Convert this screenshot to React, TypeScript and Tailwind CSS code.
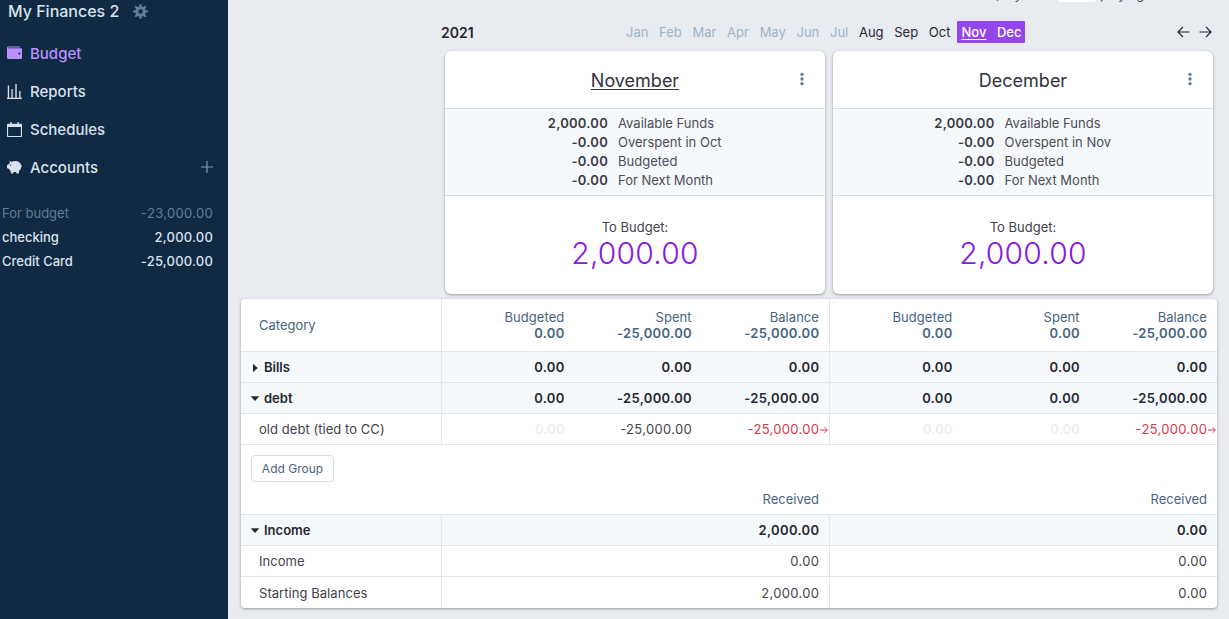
import React from "react";

const months = ["Jan", "Feb", "Mar", "Apr", "May", "Jun", "Jul", "Aug", "Sep", "Oct"];

function GearIcon() {
  return (
    <svg viewBox="0 0 20 20" className="h-[15px] w-[15px] fill-[#627d98]">
      <path d="M3.94 6.5L2.22 3.64l1.42-1.42L6.5 3.94c.52-.3 1.1-.54 1.7-.7L9 0h2l.8 3.24c.6.16 1.18.4 1.7.7l2.86-1.72 1.42 1.42-1.72 2.86c.3.52.54 1.1.7 1.7L20 9v2l-3.24.8c-.16.6-.4 1.18-.7 1.7l1.72 2.86-1.42 1.42-2.86-1.72c-.52.3-1.1.54-1.7.7L11 20H9l-.8-3.24c-.6-.16-1.18-.4-1.7-.7l-2.86 1.72-1.42-1.42 1.72-2.86c-.3-.52-.54-1.1-.7-1.7L0 11V9l3.24-.8c.16-.6.4-1.18.7-1.7zM10 13a3 3 0 1 0 0-6 3 3 0 0 0 0 6z" />
    </svg>
  );
}

function WalletIcon() {
  return (
    <svg viewBox="0 0 15 15" className="h-[15px] w-[15px] fill-current">
      <path fillRule="evenodd" d="M1.400.5H13v1H1v.7h12.800c.7 0 1.200.4 1.200 1v8.600c0 .7-.5 1.200-1.200 1.200H1.400C.6 13 0 12.400 0 11.600V2C0 1.100.6.5 1.400.5zM12.300 6.600a1 1 0 1 0 0 2 1 1 0 0 0 0-2z" />
    </svg>
  );
}

function ReportsIcon() {
  return (
    <svg viewBox="0 0 15 15" className="h-[15px] w-[15px] fill-current">
      <path d="M0 13.800h15V15H0zM.8 1.500h1.300V14H.8zM4.400 5h1.300v9H4.400zM8.300 0h1.400v14H8.300zM12.200 7h1.300v7h-1.300z" />
    </svg>
  );
}

function CalendarIcon() {
  return (
    <svg viewBox="0 0 15 15" className="h-[15px] w-[15px] fill-current">
      <path fillRule="evenodd" d="M3.200 0h1.400v1.800h5.800V0h1.400v1.800H14c.6 0 1 .4 1 1V14c0 .6-.4 1-1 1H1c-.6 0-1-.4-1-1V2.800c0-.6.4-1 1-1h2.200zM1.100 5v8.900h12.800V5z" />
    </svg>
  );
}

function PigIcon() {
  return (
    <svg viewBox="0 0 15 15" className="h-[15px] w-[15px] fill-current">
      <path fillRule="evenodd" d="M2.500 1.200c.9 0 1.600.2 2.200.6C5.700 1.200 7 1 8.200 1c3.200 0 5.500 1.700 6 4.200.4.200.7.500.8.900l-.7.600c-.1 1.700-.9 3-2.100 3.900L11.800 13.500H9.500L9.100 12c-.9.100-1.700.1-2.600 0l-.3 1.500H4l-.5-2.700c-.7-.5-1.300-1.200-1.700-2L0 8.200V5l1.500-.4c.3-.6.7-1.100 1.300-1.600zM3.600 4.400a.7.700 0 1 0 0 1.400.7.700 0 0 0 0-1.400z" />
    </svg>
  );
}

function NavItem({ icon, label, active, children }: { icon: React.ReactNode; label: string; active?: boolean; children?: React.ReactNode }) {
  return (
    <div className={`flex h-[38px] items-center pl-[7px] pr-[15px] ${active ? "text-[#b990ff]" : "text-[#d9e2ec]"}`}>
      <span className="mb-px">{icon}</span>
      <span className="ml-2 flex-1 text-[15px] font-medium">{label}</span>
      {children}
    </div>
  );
}

function AccountRow({ name, value, muted }: { name: string; value: string; muted?: boolean }) {
  return (
    <div className={`flex h-6 items-center justify-between pl-[2px] pr-[15px] ${muted ? "text-[#627d98]" : "font-medium text-[#d9e2ec]"}`}>
      <span>{name}</span>
      <span className={muted ? "tracking-[0.32px]" : "tracking-[0.2px]"}>{value}</span>
    </div>
  );
}

function ArrowLeft() {
  return (
    <svg viewBox="0 0 13 12" className="h-3 w-[13px] fill-none stroke-[#272630] stroke-[1.200]">
      <path d="M12.500 6H1M6 1L1 6l5 5" />
    </svg>
  );
}

function MonthCard({ name, prev, current }: { name: string; prev: string; current?: boolean }) {
  const lines = [
    ["2,000.00", "Available Funds"],
    ["-0.00", `Overspent in ${prev}`],
    ["-0.00", "Budgeted"],
    ["-0.00", "For Next Month"],
  ];
  return (
    <div className="flex h-[243px] w-[380px] flex-col overflow-hidden rounded-md bg-white shadow-[0_1px_3px_rgba(0,0,0,0.35)]">
      <div className="grid h-[57px] grid-cols-[1fr_auto_1fr] items-center pt-[2px]">
        <span />
        <span className={`text-[18px] leading-[22px] text-[#33323c] ${current ? "underline decoration-1 underline-offset-2" : ""}`}>{name}</span>
        <svg viewBox="0 0 4 14" className="mb-[3px] mr-[21px] h-[14px] w-1 justify-self-end fill-[#627d98]">
          <circle cx="2" cy="2.300" r="1.650" />
          <circle cx="2" cy="7" r="1.650" />
          <circle cx="2" cy="11.700" r="1.650" />
        </svg>
      </div>
      <div className="h-[88px] border-y border-[#d5deeb] bg-[#f5f9fc] pt-[5px] leading-[19px] text-[#4d4c56]">
        {lines.map(([v, l]) => (
          <div key={l} className="flex">
            <span className={`text-right font-semibold tracking-[0.25px] text-[#3b3a44] ${current ? "w-[163px]" : "w-[161.5px]"}`}>{v}</span>
            <span className="ml-[10px]">{l}</span>
          </div>
        ))}
      </div>
      <div className="flex flex-col items-center pt-[22px] text-[#44434d]">
        <span className="leading-[18px]">To Budget:</span>
        <span className="text-[30px] font-light leading-[34px] tracking-[0.2px] text-[#8719e0]">2,000.00</span>
      </div>
    </div>
  );
}

function Triangle({ open }: { open?: boolean }) {
  return (
    <svg viewBox="0 0 8 8" className="mr-[5px] h-2 w-2 overflow-visible fill-[#272630]">
      <path d={open ? "M-.3 1.300h8.600L4 6z" : "M2-.3v8.600L6.700 4z"} />
    </svg>
  );
}

type Cell = string | undefined;

function Row({ name, group, open, cells, faded = [], last }: { name: string; group?: boolean; open?: boolean; cells: Cell[][]; faded?: string[]; last?: boolean }) {
  return (
    <div className={`flex border-t border-[#e2e6ec] ${last ? "h-8" : "h-[31px]"} ${group ? "bg-[#f5f9fc] font-semibold text-[#272630]" : "text-[#44434d]"}`}>
      <div className={`flex w-[200px] items-center pt-[2px] ${group ? "pl-[10px]" : "pl-[18px] tracking-[0.05px]"}`}>
        {group && <Triangle open={open} />}
        {name}
      </div>
      {cells.map((set, m) => (
        <div key={m} className="flex w-[388px] items-center border-l border-[#e2e6ec] pl-[5px] pt-[2px] tracking-[0.32px]">
          {set.map((c, i) => {
            const isFaded = faded.includes(`${m}${i}`);
            const negative = !group && i === 2 && c?.startsWith("-");
            return (
              <div key={i} className={`relative flex-1 pr-[9.7px] text-right ${isFaded ? "font-medium text-[#ebedf1]" : ""} ${negative ? "text-[#d63a4a]" : ""}`}>
                {c}
                {negative && (
                  <svg viewBox="0 0 8 8" className="absolute right-px top-1/2 h-2 w-2 -translate-y-1/2 fill-none stroke-current stroke-1">
                    <path d="M0 4h7M4.500 1.200L7.300 4 4.500 6.800" />
                  </svg>
                )}
              </div>
            );
          })}
        </div>
      ))}
    </div>
  );
}

function HeadMonth({ spent }: { spent: string }) {
  const cols = [["Budgeted", "0.00"], ["Spent", spent], ["Balance", "-25,000.00"]];
  return (
    <div className="flex w-[388px] items-center border-l border-[#e2e6ec] pl-[5px]">
      {cols.map(([a, b]) => (
        <div key={a} className="flex flex-1 flex-col pr-[10px] text-right leading-4">
          <span className="tracking-[0.05px]">{a}</span>
          <span className="-mr-[0.3px] font-semibold tracking-[0.32px]">{b}</span>
        </div>
      ))}
    </div>
  );
}

export default function App() {
  return (
    <div className="flex h-[619px] w-[1229px] overflow-hidden bg-[#e8ecf0] font-['Inter',sans-serif] text-[13px]">
      <aside className="w-[228px] shrink-0 bg-[#102a43]">
        <div className="flex h-[35px] items-start pl-2 text-[#d9e2ec]">
          <span className="mr-[14px] text-[16px] font-medium leading-[23px]">My Finances 2</span>
          <span className="pt-1"><GearIcon /></span>
        </div>
        <NavItem icon={<WalletIcon />} label="Budget" active />
        <NavItem icon={<ReportsIcon />} label="Reports" />
        <NavItem icon={<CalendarIcon />} label="Schedules" />
        <NavItem icon={<PigIcon />} label="Accounts">
          <svg viewBox="0 0 12 12" className="mb-[2px] h-3 w-3 fill-none stroke-[#829ab1] stroke-[1.200]">
            <path d="M6 0v12M0 6h12" />
          </svg>
        </NavItem>
        <div className="pt-[15px]">
          <AccountRow name="For budget" value="-23,000.00" muted />
          <AccountRow name="checking" value="2,000.00" />
          <AccountRow name="Credit Card" value="-25,000.00" />
        </div>
      </aside>

      <main className="flex w-[1001px] flex-col pl-[13px]">
        <div className="flex h-[21px] items-start overflow-hidden pl-[755px] text-[#44434d]">
          <span className="-mt-[14px] w-[62px] leading-4">, my</span>
          <span className="h-[2px] w-[38px] rounded-b-sm bg-white" />
          <span className="-mt-[14px] ml-1 leading-4">playing</span>
        </div>
        <div className="flex h-[22px] items-center pl-[200px] pr-[17px]">
          <span className="w-[185px] text-[14px] font-semibold text-[#272630]">2021</span>
          <div className="flex items-center gap-[10.7px] pt-px">
            {months.map((m, i) => (
              <span key={m} className={i < 7 ? "text-[#9fb3c8]" : "text-[#272630]"}>{m}</span>
            ))}
          </div>
          <div className="ml-[7px] flex h-[22px] items-center gap-[10.5px] rounded-[1px] bg-[#9446ed] px-[4px] pt-px font-medium text-white">
            <span className="underline underline-offset-2">Nov</span>
            <span>Dec</span>
          </div>
          <div className="ml-auto flex gap-[9px]">
            <ArrowLeft />
            <span className="rotate-180"><ArrowLeft /></span>
          </div>
        </div>
        <div className="flex gap-2 pl-[204px] pt-2">
          <MonthCard name="November" prev="Oct" current />
          <MonthCard name="December" prev="Nov" />
        </div>

        <section className="mt-[5px] w-[976px] overflow-hidden rounded-[4px] bg-white shadow-[0_1px_3px_rgba(0,0,0,0.35)]">
          <div className="flex h-[52px] text-[#486581]">
            <div className="flex w-[200px] items-center pl-[18px] pt-[2px]">Category</div>
            <HeadMonth spent="-25,000.00" />
            <HeadMonth spent="0.00" />
          </div>
          <Row name="Bills" group cells={[["0.00", "0.00", "0.00"], ["0.00", "0.00", "0.00"]]} />
          <Row name="debt" group open cells={[["0.00", "-25,000.00", "-25,000.00"], ["0.00", "0.00", "-25,000.00"]]} />
          <Row name="old debt (tied to CC)" cells={[["0.00", "-25,000.00", "-25,000.00"], ["0.00", "0.00", "-25,000.00"]]} faded={["00", "10", "11"]} />
          <div className="flex h-[70px] flex-col border-t border-[#e2e6ec] pt-[10px] text-[#486581]">
            <button className="ml-[10px] h-[27px] w-[83px] rounded-[4px] border border-[#d5deeb] text-[12px]">Add Group</button>
            <div className="mt-2 flex pl-[200px] leading-[18px]">
              <span className="w-[388px] pr-[10px] text-right">Received</span>
              <span className="w-[388px] pr-[10px] text-right">Received</span>
            </div>
          </div>
          <Row name="Income" group open cells={[["2,000.00"], ["0.00"]]} />
          <Row name="Income" cells={[["0.00"], ["0.00"]]} />
          <Row name="Starting Balances" last cells={[["2,000.00"], ["0.00"]]} />
        </section>
      </main>
    </div>
  );
}
